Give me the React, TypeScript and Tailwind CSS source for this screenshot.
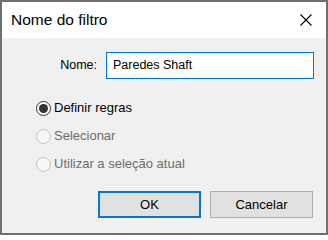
import React from "react";

function Radio({ checked, disabled, label }: { checked?: boolean; disabled?: boolean; label: string }) {
  return (
    <div className="flex h-[28px] items-center">
      <div
        className={
          disabled
            ? "flex h-[15px] w-[15px] items-center justify-center rounded-full border border-[#c2c2c2] bg-[#f7f7f7]"
            : "flex h-[15px] w-[15px] items-center justify-center rounded-full border border-[#333333] bg-white"
        }
      >
        {checked ? <div className="h-[9px] w-[9px] rounded-full bg-[#333333]" /> : null}
      </div>
      <span className={disabled ? "ml-[3px] text-[13px] text-[#6d6d6d]" : "ml-[3px] text-[13px] text-black"}>{label}</span>
    </div>
  );
}

export default function App() {
  return (
    <div
      className="flex h-[235px] w-[328px] flex-col border-2 border-[#707070] bg-[#f0f0f0]"
      style={{ fontFamily: '"Liberation Sans", Arial, sans-serif' }}
    >
      <div className="flex h-[36px] shrink-0 items-center justify-between bg-white pl-[9px] pr-[14px]">
        <span className="text-[15.5px] text-black">Nome do filtro</span>
        <svg width="12" height="12" viewBox="0 0 12 12">
          <path d="M0.5 0.5 L11.5 11.5 M11.5 0.5 L0.5 11.5" stroke="#000" strokeWidth="1.1" />
        </svg>
      </div>
      <div className="flex flex-col">
        <div className="mt-[14px] flex items-center pl-[50px]">
          <span className="w-[45px] text-right text-[12.5px] text-black">Nome:</span>
          <div className="ml-[9px] flex h-[27px] w-[208px] items-center border border-[#0078d7] bg-white pl-[6px] text-[12.5px] text-black">
            Paredes Shaft
          </div>
        </div>
        <div className="mt-[15px] flex flex-col pl-[34px]">
          <Radio checked label="Definir regras" />
          <Radio disabled label="Selecionar" />
          <Radio disabled label="Utilizar a seleção atual" />
        </div>
        <div className="mt-[13px] flex justify-end gap-[9px] pr-[13px]">
          <button className="flex h-[27px] w-[103px] items-center justify-center border-2 border-[#0078d7] bg-[#e1e1e1] text-[13px] text-black">
            OK
          </button>
          <button className="flex h-[27px] w-[103px] items-center justify-center border border-[#adadad] bg-[#e1e1e1] text-[13px] text-black">
            Cancelar
          </button>
        </div>
      </div>
    </div>
  );
}
